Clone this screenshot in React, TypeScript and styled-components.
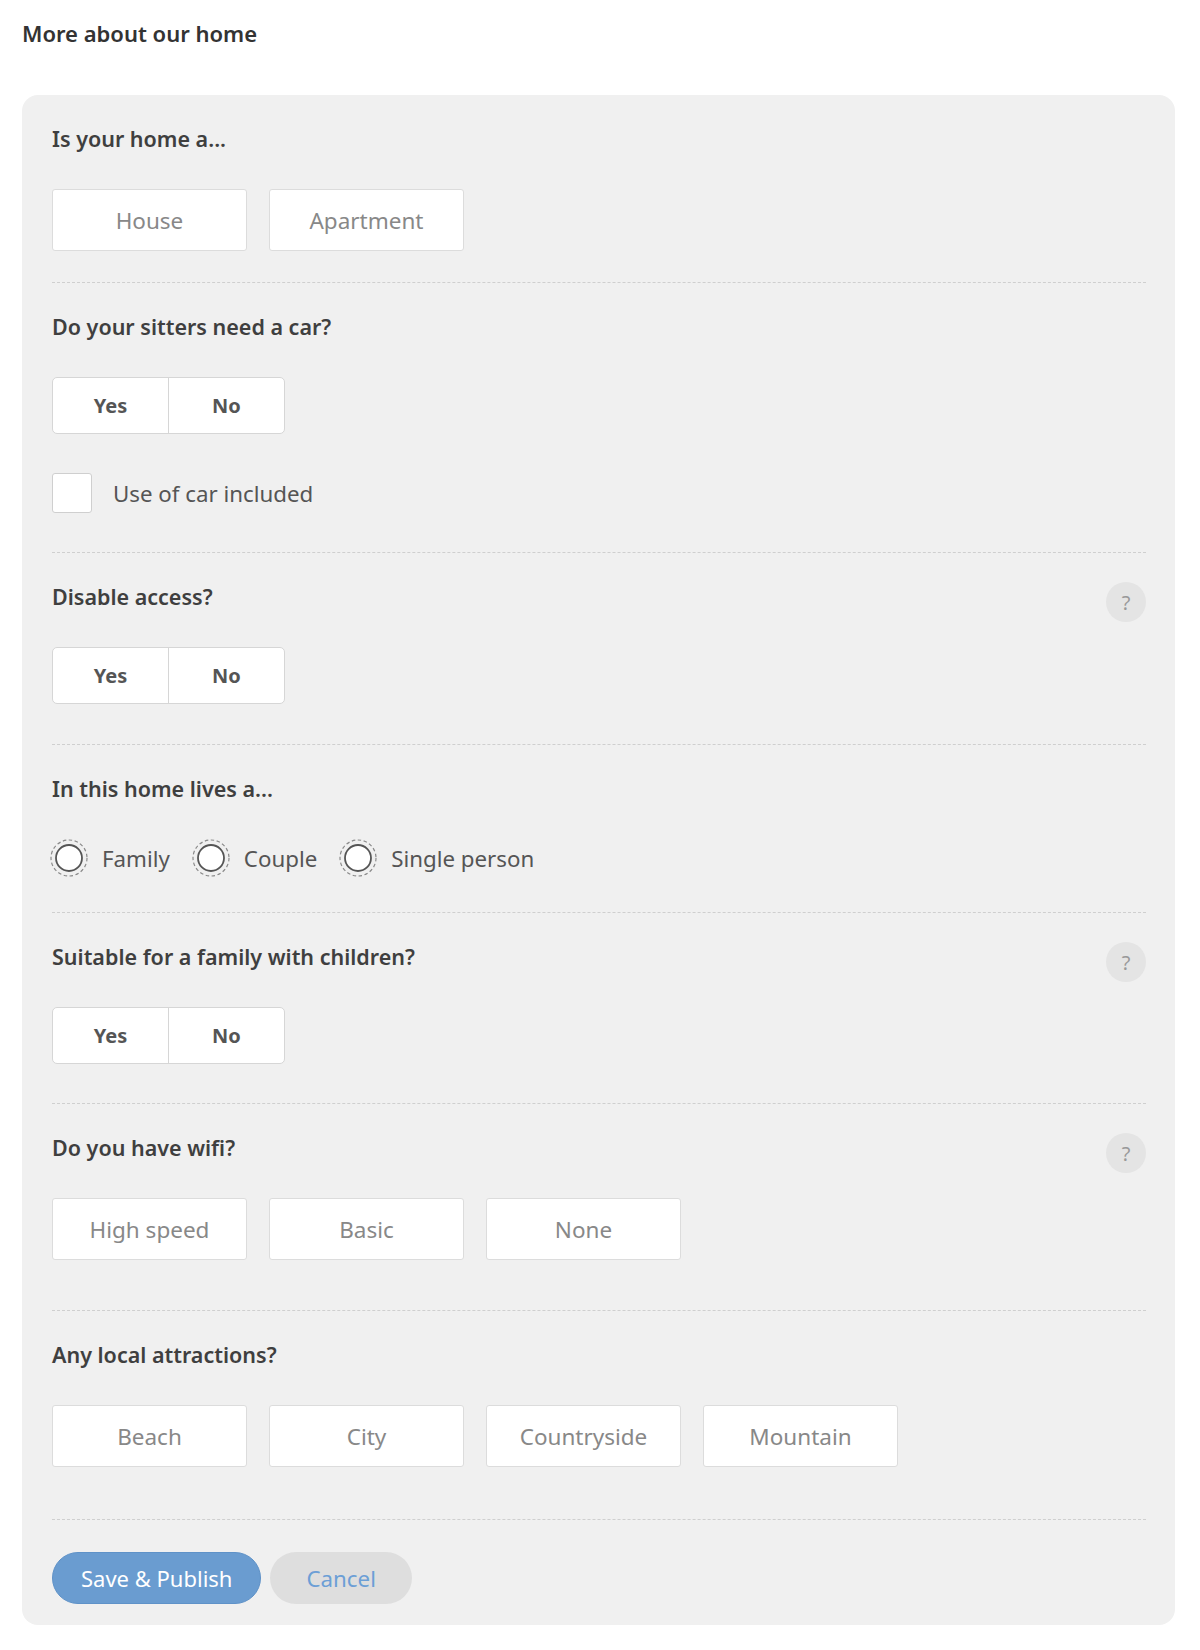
import React, {useState} from "react";
import styled, {createGlobalStyle} from "styled-components";

const GlobalStyle = createGlobalStyle`
  body {
    margin: 0;
    background: #fff;
    font-family: "Noto Sans", "Open Sans", sans-serif;
  }
  * {
    box-sizing: border-box;
  }
`;

type Question = {
  title: string;
  help?: boolean;
  kind: "choice" | "toggle" | "radio";
  options?: string[];
  pb: number;
  checkbox?: string;
};

const questions: Question[] = [
  {title: "Is your home a...", kind: "choice", options: ["House", "Apartment"], pb: 31},
  {title: "Do your sitters need a car?", kind: "toggle", pb: 39, checkbox: "Use of car included"},
  {title: "Disable access?", kind: "toggle", help: true, pb: 40},
  {title: "In this home lives a...", kind: "radio", options: ["Family", "Couple", "Single person"], pb: 35},
  {title: "Suitable for a family with children?", kind: "toggle", help: true, pb: 39},
  {title: "Do you have wifi?", kind: "choice", help: true, options: ["High speed", "Basic", "None"], pb: 50},
  {
    title: "Any local attractions?",
    kind: "choice",
    options: ["Beach", "City", "Countryside", "Mountain"],
    pb: 52,
  },
];

function RadioMark() {
  return (
    <svg width="38" height="38" viewBox="0 0 38 38">
      <circle cx="19" cy="19" r="18" fill="none" stroke="#8a8a8a" strokeWidth="1.2" strokeDasharray="3.5 2.5" />
      <circle cx="19" cy="19" r="13" fill="#fff" stroke="#555" strokeWidth="1.8" />
    </svg>
  );
}

export default function App() {
  const [checked, setChecked] = useState(false);
  return (
    <Page>
      <GlobalStyle />
      <Heading>More about our home</Heading>
      <Card>
        {questions.map((q) => (
          <Section key={q.title} $pb={q.pb}>
            <SectionHead>
              <QuestionLabel>{q.title}</QuestionLabel>
              {q.help && <HelpButton type="button">?</HelpButton>}
            </SectionHead>
            {q.kind === "choice" && (
              <ChoiceRow>
                {q.options!.map((o) => (
                  <ChoiceButton key={o} type="button">
                    {o}
                  </ChoiceButton>
                ))}
              </ChoiceRow>
            )}
            {q.kind === "toggle" && (
              <Toggle>
                <ToggleItem type="button">Yes</ToggleItem>
                <ToggleItem type="button">No</ToggleItem>
              </Toggle>
            )}
            {q.kind === "radio" && (
              <RadioRow>
                {q.options!.map((o) => (
                  <RadioItem key={o}>
                    <RadioMark />
                    {o}
                  </RadioItem>
                ))}
              </RadioRow>
            )}
            {q.checkbox && (
              <CheckRow onClick={() => setChecked(!checked)}>
                <CheckBox $checked={checked} />
                {q.checkbox}
              </CheckRow>
            )}
          </Section>
        ))}
        <Footer>
          <PrimaryButton type="button">Save &amp; Publish</PrimaryButton>
          <CancelButton type="button">Cancel</CancelButton>
        </Footer>
      </Card>
    </Page>
  );
}

const Page = styled.div`
  padding: 18px 25px 24px 22px;
`;

const Heading = styled.h1`
  margin: 0;
  font-size: 22px;
  font-weight: 600;
  line-height: 30px;
  color: #333;
`;

const Card = styled.div`
  margin-top: 47px;
  background: #f0f0f0;
  border-radius: 16px;
  padding: 0 29px 0 30px;
`;

const Section = styled.div<{$pb: number}>`
  padding: 31px 0 ${(p) => p.$pb}px;
  border-bottom: 1px dashed #cfcfcf;
`;

const SectionHead = styled.div`
  display: flex;
  align-items: center;
  justify-content: space-between;
  height: 26px;
`;

const QuestionLabel = styled.div`
  font-size: 21.5px;
  font-weight: 600;
  line-height: 26px;
  color: #3f3f3f;
`;

const HelpButton = styled.button`
  width: 40px;
  height: 40px;
  margin-top: 10px;
  border: none;
  border-radius: 50%;
  background: #e4e4e4;
  color: #999;
  font-family: inherit;
  font-size: 20px;
  padding: 0;
`;

const ChoiceRow = styled.div`
  display: flex;
  gap: 22px;
  margin-top: 37px;
`;

const ChoiceButton = styled.button`
  width: 195px;
  height: 62px;
  background: #fff;
  border: 1px solid #dcdcdc;
  border-radius: 3px;
  font-family: inherit;
  font-size: 22.5px;
  color: #888;
`;

const Toggle = styled.div`
  display: flex;
  width: 233px;
  height: 57px;
  margin-top: 37px;
  background: #fff;
  border: 1px solid #d6d6d6;
  border-radius: 5px;
`;

const ToggleItem = styled.button`
  flex: 1;
  border: none;
  background: none;
  font-family: inherit;
  font-size: 20px;
  font-weight: 700;
  color: #555;
  & + & {
    border-left: 1px solid #d6d6d6;
  }
`;

const CheckRow = styled.label`
  display: flex;
  align-items: center;
  gap: 21px;
  margin-top: 39px;
  font-size: 22.3px;
  color: #555;
  cursor: pointer;
`;

const CheckBox = styled.span<{$checked: boolean}>`
  width: 40px;
  height: 40px;
  background: ${(p) => (p.$checked ? "#6b9dd2" : "#fff")};
  border: 1px solid #cfcfcf;
  border-radius: 3px;
`;

const RadioRow = styled.div`
  display: flex;
  gap: 22px;
  margin-top: 37px;
  margin-left: -2px;
`;

const RadioItem = styled.label`
  display: flex;
  align-items: center;
  gap: 14px;
  font-size: 22.3px;
  color: #555;
`;

const Footer = styled.div`
  display: flex;
  gap: 9px;
  padding: 32px 0 21px;
`;

const PrimaryButton = styled.button`
  height: 52px;
  padding: 0 28px;
  border: 1px solid #5f92c8;
  border-radius: 26px;
  background: #6a9cd0;
  color: #fff;
  font-family: inherit;
  font-size: 22px;
`;

const CancelButton = styled.button`
  height: 52px;
  padding: 0 36px;
  border: none;
  border-radius: 26px;
  background: #dedede;
  color: #6c9fd6;
  font-family: inherit;
  font-size: 22.3px;
`;
